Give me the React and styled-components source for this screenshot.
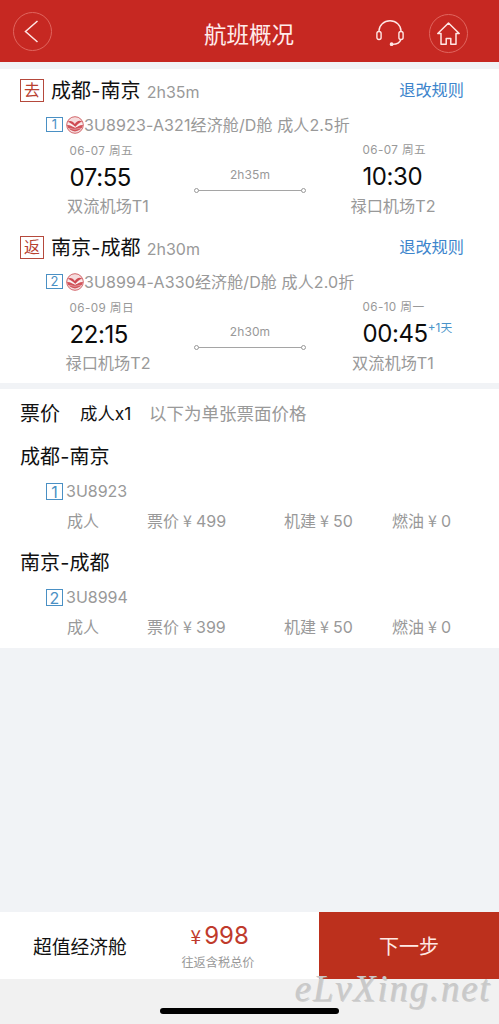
import React from 'react'
import styled, { createGlobalStyle } from 'styled-components';


const GlobalStyle = createGlobalStyle`
    *, *::before, *::after { box-sizing: border-box; }
    body { margin: 0; background: #f0f0f0; font-family: Inter, 'Noto Sans CJK SC', sans-serif; color: #111; }
`

const Page = styled.div`display: flex; flex-direction: column; width: 499px; height: 1024px; overflow: hidden; background: #f1f3f6;`

const Header = styled.header`display: flex; align-items: center; height: 62px; padding: 4px 31px 0 13px; background: #c62822; color: #ffeceb;`
const Circle = styled.span`display: flex; width: 39px; height: 39px; border: 1px solid #e0655e; border-radius: 50%; align-items: center; justify-content: center; margin-top: ${p => p.$top || 0}px;`
const Title = styled.h1`flex: 1; margin: 3px 0 0 152px; font-size: 22.5px; font-weight: 400; line-height: 30px;`
const HeadsetBox = styled.span`display: flex; margin: 0 25px 0 0;`

const Panel = styled.section`background: #fff; margin-top: ${p => p.$gap}px;`

const Leg = styled.article`height: 157px;`
const LegHead = styled.div`display: flex; align-items: center; height: 42px; padding: 0 35px 0 20px;`
const Tag = styled.span`display: flex; align-items: center; justify-content: center; width: 24px; height: 23px; border: 1px solid #b5493c; color: #b8402f; font-size: 16px; line-height: 1;`
const Route = styled.span`margin: 2px 0 0 7px; font-size: 20px; letter-spacing: 0.1px; line-height: 28px;`
const Duration = styled.span`margin: 3px 0 0 6px; font-size: 16px; letter-spacing: 0; color: #999;`
const Rule = styled.a`margin: -2px 0 0 auto; font-size: 16.2px; color: #3d85cc;`

const FlightRow = styled.div`display: flex; align-items: center; height: ${p => p.$h}px; padding-left: 46px; font-size: 16px; color: #999;`
const Num = styled.span`display: flex; align-items: center; justify-content: center; width: 17px; height: ${p => p.$h || 15}px; margin: ${p => p.$top || 0}px 3px 0 0; border: 1px solid #4a90c4; color: #4a90c4; font-size: ${p => p.$size || 13}px; line-height: 1;`
const FlightText = styled.span`margin-top: -2px; letter-spacing: ${p => p.$ls || 0}px; white-space: nowrap;`

const Times = styled.div`display: flex; padding-left: 53px;`
const Stop = styled.div`width: 110px; margin-top: ${p => p.$top}px;`
const Day = styled.div`height: 22px; line-height: 22px; padding-left: ${p => p.$left}px; font-size: 11.7px; letter-spacing: 0.4px; color: #999;`
const Clock = styled.div`display: flex; height: ${p => p.$h}px; line-height: 32px; padding-left: ${p => p.$left}px; font-size: 24px; letter-spacing: -0.4px; color: #0c0c0c; white-space: nowrap;`
const NextDay = styled.span`margin: -6px 0 0 0; font-size: 11.8px; letter-spacing: 0; color: #4a93c9;`
const Airport = styled.div`height: 28px; line-height: 28px; font-size: 16.2px; text-align: center; color: #999;`
const Track = styled.div`width: 112px; margin: 27px 32px 0 31px; text-align: center; font-size: 12px; letter-spacing: 0.1px; line-height: 18px; color: #999;`
const Line = styled.div`
    display: flex; align-items: center; justify-content: space-between; height: 9px; margin-top: 2px;
    background: linear-gradient(#a5a5a5, #a5a5a5) center / 104px 1px no-repeat;
    &::before, &::after { content: ''; width: 5px; height: 5px; border: 1px solid #999; border-radius: 50%; background: #fff; }
`

const PriceHead = styled.div`display: flex; align-items: center; height: 47px; padding-left: 20px;`
const PriceTitle = styled.span`width: 60px; font-size: 20px;`
const People = styled.span`width: 69px; font-size: 17.4px;`
const Note = styled.span`margin-top: -1px; font-size: 17.5px; color: #999;`
const Fare = styled.div`height: 106px; overflow: hidden;`
const FareRoute = styled.div`height: 41px; line-height: 43px; padding-left: 20px; font-size: 20px; letter-spacing: 0.1px;`
const FareGrid = styled.div`display: grid; grid-template-columns: 80px 137px 108px 1fr; height: 31px; line-height: 31px; padding-left: 67px; font-size: 16px; color: #999; white-space: nowrap;`
const Yen = styled.span`display: inline-block; width: ${p => p.$w || 17}px; text-align: center; font-family: 'Noto Sans CJK SC', sans-serif; font-size: ${p => p.$size || 16}px; line-height: 1;`

const Bottom = styled.footer`display: flex; height: 67px; margin-top: auto; background: #fff;`
const Cabin = styled.div`width: 160px; padding-left: 33px; line-height: 72px; font-size: 18.8px;`
const Total = styled.div`width: 159px; padding: 8px 43px 0 0; text-align: center; color: #bf3a2c;`
const Amount = styled.div`font-size: 24px; line-height: 31px; height: 31px; white-space: nowrap;`
const TotalNote = styled.div`font-size: 12.2px; line-height: 23px; color: #999; white-space: nowrap;`
const Next = styled.button`flex: 1; border: 0; padding: 0; background: #bc301d; color: #ffe9e4; font-family: inherit; font-size: 20px;`
const Safe = styled.div`position: relative; height: 45px; background: #f1f1f1;`
const HomeBar = styled.div`width: 179px; height: 6px; margin: 29px 0 0 160px; border-radius: 3px; background: #000;`
const Mark = styled.div`position: absolute; right: 8px; top: -14px; font-family: 'Liberation Serif', serif; font-style: italic; font-size: 37px; letter-spacing: 1.7px; line-height: 48px; color: #c9c9c9; text-shadow: 1px 1px 0 rgba(150, 150, 150, 0.35); white-space: nowrap;`


const BackIcon = () => (
    <svg width="37" height="37" viewBox="0 0 37 37" fill="none" stroke="#ffe6e4" strokeWidth="1.5">
        <path d="M23.5 8 L11.5 18.5 L23.5 29" />
    </svg>
)

const HomeIcon = () => (
    <svg width="37" height="37" viewBox="0 0 37 37" fill="none" stroke="#ffe6e4" strokeWidth="1.5" strokeLinejoin="round">
        <path d="M18.5 8 L7.8 18.5 H11 V29.3 H16.2 V23.5 H20.8 V29.3 H26 V18.5 H29.2 Z" />
    </svg>
)

const HeadsetIcon = () => (
    <svg width="28" height="28" viewBox="0 0 28 28" fill="none" stroke="#ffe6e4" strokeWidth="1.4">
        <path d="M3 13 V12 C3 6 8 1.8 14 1.8 S25 6 25 12 V13" />
        <rect x="0.9" y="12.5" width="4.2" height="8" rx="2" />
        <rect x="22.9" y="12.5" width="4.2" height="8" rx="2" />
        <path d="M24.8 20.5 C24 23.6 21 25.3 16.5 25.4" />
        <circle cx="15.6" cy="25.2" r="1.2" fill="#ffe6e4" />
    </svg>
)

const AirlineLogo = () => (
    <svg width="18" height="18" viewBox="0 0 18 18">
        <circle cx="9" cy="9" r="8.3" fill="#f6dcdd" stroke="#d2666b" strokeWidth="1" />
        <path d="M1 9 C4 8.6 6 11 9 11 S14 8.6 17 9 A8.2 8.2 0 0 1 1 9Z" fill="#d2545b" />
        <path d="M1.6 5.6 C4.5 4 7 5.4 8.8 8 C10.5 5.4 13 3.8 16.4 5.6 C13.6 6.4 11.6 8.4 9.3 11 C7 8.8 5 7.2 1.6 5.6Z" fill="#cf4a52" />
        <path d="M1.8 8 C5 7.4 6.6 10.4 9.2 11.4 C11.6 10.2 13.4 7.6 16.4 8" fill="none" stroke="#fff" strokeWidth="0.9" />
        <path d="M2.8 12.6 C5 11.6 7 14 10 13.2 S14 12.2 15.4 12.6" fill="none" stroke="#fff" strokeOpacity="0.5" strokeWidth="0.7" />
    </svg>
)


const legs = [
    {
        tag: '去', route: '成都-南京', duration: '2h35m', no: 1, code: '3U8923', flight: '3U8923-A321经济舱/D舱 成人2.5折',
        from: { day: '06-07 周五', time: '07:55', airport: '双流机场T1' },
        to: { day: '06-07 周五', time: '10:30', airport: '禄口机场T2' },
        price: 499
    },
    {
        tag: '返', route: '南京-成都', duration: '2h30m', no: 2, code: '3U8994', flight: '3U8994-A330经济舱/D舱 成人2.0折',
        from: { day: '06-09 周日', time: '22:15', airport: '禄口机场T2' },
        to: { day: '06-10 周一', time: '00:45', airport: '双流机场T1', next: '+1天' },
        price: 399
    }
]

const StopInfo = ({ stop, top, left, clockHeight }) => (
    <Stop $top={top}>
        <Day $left={left}>{stop.day}</Day>
        <Clock $left={left} $h={clockHeight}>{stop.time}{stop.next && <NextDay>{stop.next}</NextDay>}</Clock>
        <Airport>{stop.airport}</Airport>
    </Stop>
)

const App = () => {
    return (
        <>
            <GlobalStyle />
            <Page>
                <Header>
                    <Circle $top={-3}><BackIcon /></Circle>
                    <Title>航班概况</Title>
                    <HeadsetBox><HeadsetIcon /></HeadsetBox>
                    <Circle><HomeIcon /></Circle>
                </Header>
                <Panel $gap={7}>
                    {legs.map(leg => (
                        <Leg key={leg.no}>
                            <LegHead>
                                <Tag>{leg.tag}</Tag>
                                <Route>{leg.route}</Route>
                                <Duration>{leg.duration}</Duration>
                                <Rule>退改规则</Rule>
                            </LegHead>
                            <FlightRow $h={28}>
                                <Num $top={-2}>{leg.no}</Num>
                                <AirlineLogo />
                                <FlightText $ls={0.12}>{leg.flight}</FlightText>
                            </FlightRow>
                            <Times>
                                <StopInfo stop={leg.from} top={1} left={16.5} clockHeight={30} />
                                <Track>
                                    {leg.duration}
                                    <Line />
                                </Track>
                                <StopInfo stop={leg.to} top={0} left={24.5} clockHeight={31} />
                            </Times>
                        </Leg>
                    ))}
                </Panel>
                <Panel $gap={6}>
                    <PriceHead>
                        <PriceTitle>票价</PriceTitle>
                        <People>成人x1</People>
                        <Note>以下为单张票面价格</Note>
                    </PriceHead>
                    {legs.map(leg => (
                        <Fare key={leg.no}>
                            <FareRoute>{leg.route}</FareRoute>
                            <FlightRow $h={29}>
                                <Num $h={17} $size={16}>{leg.no}</Num>
                                <FlightText>{leg.code}</FlightText>
                            </FlightRow>
                            <FareGrid>
                                <span>成人</span>
                                <span>票价<Yen>¥</Yen>{leg.price}</span>
                                <span>机建<Yen>¥</Yen>50</span>
                                <span>燃油<Yen>¥</Yen>0</span>
                            </FareGrid>
                        </Fare>
                    ))}
                </Panel>
                <Bottom>
                    <Cabin>超值经济舱</Cabin>
                    <Total>
                        <Amount><Yen $size={19}>¥</Yen>998</Amount>
                        <TotalNote>往返含税总价</TotalNote>
                    </Total>
                    <Next>下一步</Next>
                </Bottom>
                <Safe>
                    <Mark>eLvXing.net</Mark>
                    <HomeBar />
                </Safe>
            </Page>
        </>
    )
}
export default App;
